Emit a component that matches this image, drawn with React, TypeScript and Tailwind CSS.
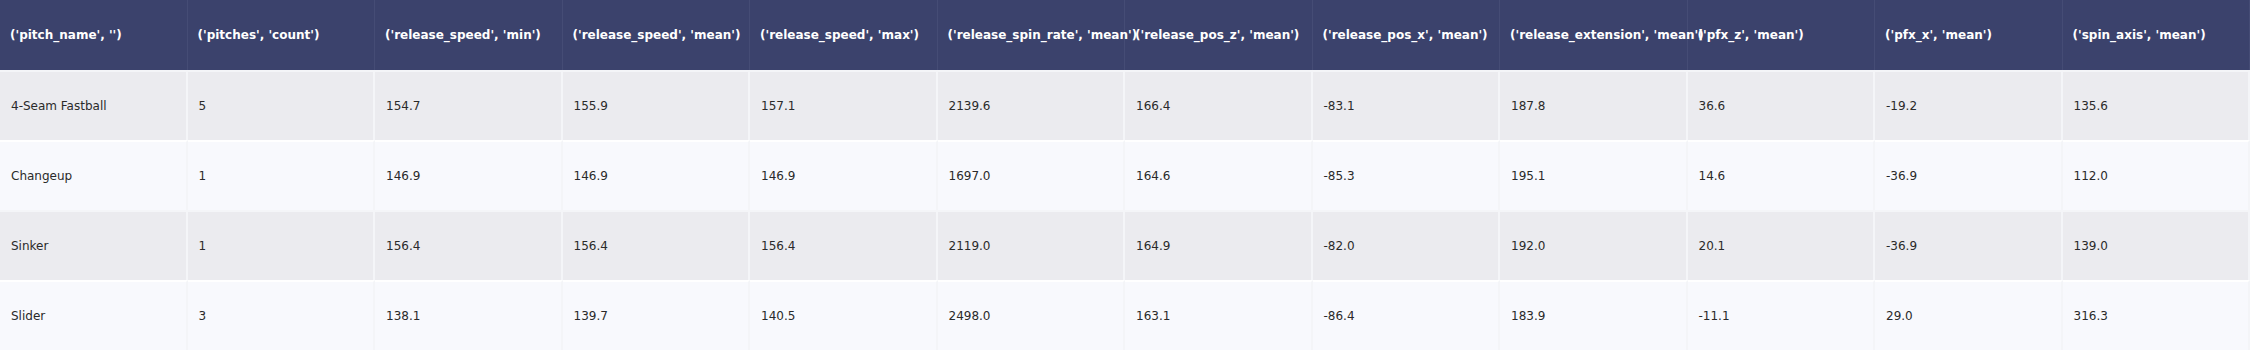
const columns = [
  "('pitch_name', '')",
  "('pitches', 'count')",
  "('release_speed', 'min')",
  "('release_speed', 'mean')",
  "('release_speed', 'max')",
  "('release_spin_rate', 'mean')",
  "('release_pos_z', 'mean')",
  "('release_pos_x', 'mean')",
  "('release_extension', 'mean')",
  "('pfx_z', 'mean')",
  "('pfx_x', 'mean')",
  "('spin_axis', 'mean')",
];

const rows: string[][] = [
  ["4-Seam Fastball", "5", "154.7", "155.9", "157.1", "2139.6", "166.4", "-83.1", "187.8", "36.6", "-19.2", "135.6"],
  ["Changeup", "1", "146.9", "146.9", "146.9", "1697.0", "164.6", "-85.3", "195.1", "14.6", "-36.9", "112.0"],
  ["Sinker", "1", "156.4", "156.4", "156.4", "2119.0", "164.9", "-82.0", "192.0", "20.1", "-36.9", "139.0"],
  ["Slider", "3", "138.1", "139.7", "140.5", "2498.0", "163.1", "-86.4", "183.9", "-11.1", "29.0", "316.3"],
];

export default function App() {
  return (
    <div className="w-[2250px] h-[350px] bg-white font-['DejaVu_Sans',Verdana,sans-serif] text-[12px]">
      <div className="grid grid-cols-12">
        {columns.map((c) => (
          <div
            key={c}
            className="h-[70px] flex items-center pl-[10px] bg-[#3b426c] border-r border-[#454c75] text-white font-bold whitespace-nowrap overflow-visible"
          >
            <span className="relative">{c}</span>
          </div>
        ))}
        {rows.map((r, i) =>
          r.map((v, j) => (
            <div
              key={`${i}-${j}`}
              className={`h-[70px] flex items-center pl-[11px] border-t-2 border-r-2 border-[#f4f5f8] text-[#2a2a2a] ${
                i % 2 === 0 ? "bg-[#ebebef]" : "bg-[#f8f9fd] border-t-white"
              }`}
            >
              {v}
            </div>
          ))
        )}
      </div>
    </div>
  );
}
